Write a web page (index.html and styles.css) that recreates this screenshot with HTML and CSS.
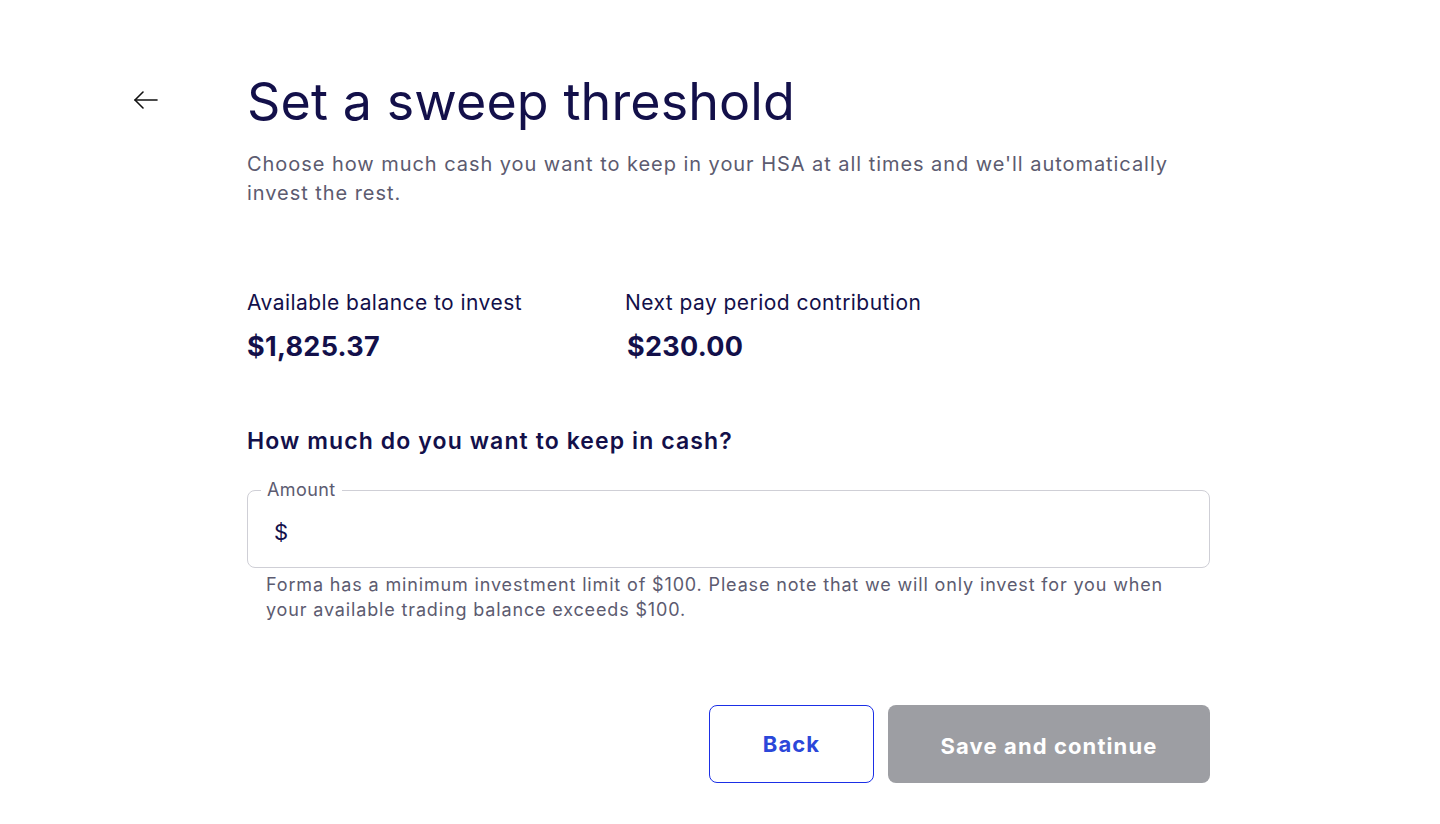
FILE: index.html
```html
<!DOCTYPE html>
<html lang="en">
<head>
  <meta charset="UTF-8" />
  <title>Set a sweep threshold</title>
  <meta name="viewport" content="width=device-width, initial-scale=1.0" />
  <link rel="stylesheet" href="styles.css">
</head>
<body>
  <div class="page">
    <div class="side">
      <button class="back-arrow" aria-label="Back">
        <svg width="26" height="20" viewBox="0 0 26 20" fill="none" stroke="#111" stroke-width="1.6" stroke-linecap="round" stroke-linejoin="round">
          <path d="M24 10H2" />
          <path d="M10 2L2 10l8 8" />
        </svg>
      </button>
    </div>

    <div class="content">
      <h1>Set a sweep threshold</h1>
      <p class="lead">Choose how much cash you want to keep in your HSA at all times and we'll automatically invest the rest.</p>

      <div class="stats">
        <div class="stat">
          <div class="stat-label">Available balance to invest</div>
          <div class="stat-value">$1,825.37</div>
        </div>
        <div class="stat">
          <div class="stat-label">Next pay period contribution</div>
          <div class="stat-value">$230.00</div>
        </div>
      </div>

      <h2>How much do you want to keep in cash?</h2>

      <fieldset class="field">
        <legend>Amount</legend>
        <span class="prefix">$</span>
        <input type="text" />
      </fieldset>
      <p class="hint">Forma has a minimum investment limit of $100. Please note that we will only invest for you when your available trading balance exceeds $100.</p>

      <div class="actions">
        <button class="btn btn-outline">Back</button>
        <button class="btn btn-disabled" disabled>Save and continue</button>
      </div>
    </div>
  </div>
</body>
</html>
```

FILE: styles.css
```css
body {
  font-family: 'Inter', 'Noto Sans', sans-serif;
  background: white;
  margin: 0;
  color: #13104a;
}
.page {
  display: flex;
  padding-top: 72px;
}
.side {
  width: 247px;
  display: flex;
  justify-content: flex-start;
}
.back-arrow {
  margin: 18px 0 0 132px;
  width: 28px;
  height: 22px;
  padding: 0;
  border: none;
  background: none;
  cursor: pointer;
}
.content {
  width: 963px;
}
h1 {
  font-size: 52px;
  font-weight: 400;
  letter-spacing: 0.1px;
  margin: 0;
  line-height: 60px;
  color: #13104a;
}
.lead {
  font-size: 20px;
  line-height: 29px;
  letter-spacing: 0.95px;
  color: #5c5b70;
  margin: 18px 0 0;
  max-width: 940px;
}
.stats {
  display: flex;
  margin-top: 81px;
}
.stat {
  width: 378px;
}
.stat-label {
  font-size: 21px;
  line-height: 28px;
  letter-spacing: 0.45px;
}
.stat-value {
  font-size: 27px;
  font-weight: 700;
  letter-spacing: 0.3px;
  margin-top: 14px;
  line-height: 32px;
}
.stat + .stat .stat-value {
  padding-left: 2px;
}
h2 {
  font-size: 23px;
  font-weight: 600;
  letter-spacing: 1.1px;
  margin: 63px 0 0;
  line-height: 30px;
}
.field {
  margin: 26px 0 0;
  border: 1px solid #cfcfd6;
  border-radius: 8px;
  padding: 0 20px 0 26px;
  height: 86px;
  display: flex;
  align-items: center;
  box-sizing: border-box;
}
.field legend {
  font-size: 18px;
  letter-spacing: 0.4px;
  color: #5c5b70;
  padding: 0 6px;
  margin-left: -13px;
  line-height: 16px;
}
.prefix {
  font-size: 22px;
  margin-top: -2px;
}
.field input {
  flex: 1;
  border: none;
  outline: none;
  font-size: 22px;
  margin-left: 6px;
  background: transparent;
}
.hint {
  font-size: 18px;
  line-height: 25px;
  letter-spacing: 0.85px;
  color: #5c5b70;
  margin: 4px 0 0 19px;
  max-width: 920px;
}
.actions {
  display: flex;
  justify-content: flex-end;
  gap: 14px;
  margin-top: 83px;
}
.btn {
  height: 78px;
  border-radius: 8px;
  font-family: inherit;
  font-size: 22px;
  font-weight: 700;
  letter-spacing: 1.1px;
  cursor: pointer;
}
.btn-outline {
  width: 165px;
  background: white;
  color: #2b47d9;
  border: 1px solid #1b2fe6;
}
.btn-disabled {
  width: 322px;
  padding-top: 4px;
  background: #9d9ea3;
  color: white;
  border: none;
  cursor: default;
}
```
